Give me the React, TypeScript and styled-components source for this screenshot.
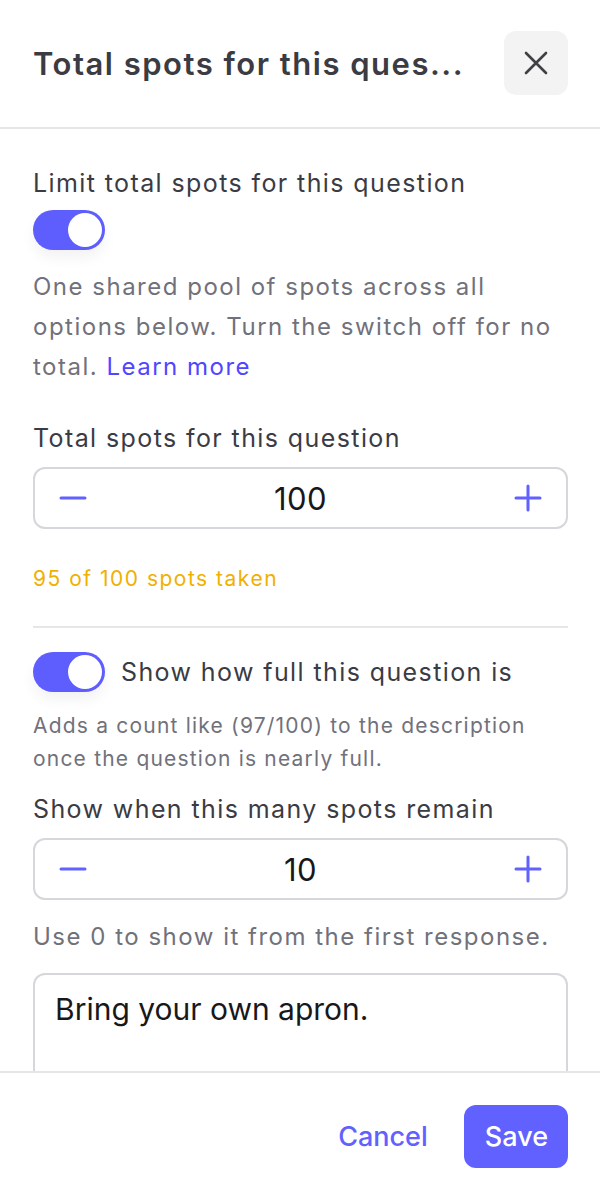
import React from "react";
import styled, { createGlobalStyle } from "styled-components";

const GlobalStyle = createGlobalStyle`
  * { box-sizing: border-box; }
  html, body { margin: 0; padding: 0; background: #ffffff; }
  body { font-family: Inter, "Noto Sans", "Liberation Sans", sans-serif; -webkit-font-smoothing: antialiased; }
`;

const PRIMARY = "#6161ff";

const Panel = styled.div`
  width: 600px;
  height: 1200px;
  display: flex;
  flex-direction: column;
  background: #fff;
  overflow: hidden;
`;

const Header = styled.header`
  height: 129px;
  flex: none;
  display: flex;
  align-items: center;
  justify-content: space-between;
  gap: 24px;
  padding: 0 32px 1px 33px;
  border-bottom: 2px solid #e6e6e9;
`;

const Title = styled.h2`
  margin: 0;
  font-size: 31px;
  font-weight: 600;
  color: #3b3b44;
  white-space: nowrap;
  overflow: hidden;
  text-overflow: ellipsis;
  letter-spacing: 1.5px;
`;

const CloseButton = styled.button`
  flex: none;
  width: 64px;
  height: 64px;
  border: none;
  border-radius: 12px;
  background: #f3f3f4;
  display: flex;
  align-items: center;
  justify-content: center;
  padding: 0;
  cursor: pointer;
`;

const Body = styled.div`
  flex: 1;
  min-height: 0;
  overflow: hidden;
  padding: 36px 32px 0 33px;
`;

const Label = styled.div<{ $mt?: number }>`
  font-size: 25px;
  line-height: 36px;
  letter-spacing: 1.4px;
  color: #3b3b44;
  font-weight: 400;
  margin-top: ${(p) => p.$mt ?? 0}px;
`;

const Help = styled.p<{ $mt?: number; $size?: "lg" | "sm" }>`
  margin: ${(p) => p.$mt ?? 0}px 0 0;
  font-size: ${(p) => (p.$size === "sm" ? "21px" : "24px")};
  line-height: ${(p) => (p.$size === "sm" ? "33px" : "40px")};
  letter-spacing: ${(p) => (p.$size === "sm" ? "1.2px" : "1.5px")};
  color: #71717b;
`;

const Link = styled.a`
  color: #5046ff;
  text-decoration: none;
`;

const SwitchTrack = styled.button<{ $on: boolean }>`
  flex: none;
  width: 72px;
  height: 40px;
  border-radius: 20px;
  border: none;
  padding: 3px;
  background: ${(p) => (p.$on ? "#5e5eff" : "#d4d4d8")};
  display: flex;
  justify-content: ${(p) => (p.$on ? "flex-end" : "flex-start")};
  align-items: center;
  box-shadow: 0 8px 14px rgba(0, 0, 0, 0.05);
  cursor: pointer;
`;

const SwitchKnob = styled.span`
  width: 34px;
  height: 34px;
  border-radius: 50%;
  background: #fff;
`;

const SwitchRow = styled.div<{ $mt?: number }>`
  display: flex;
  align-items: center;
  gap: 16px;
  margin-top: ${(p) => p.$mt ?? 0}px;
`;

const SwitchLabel = styled.span`
  font-size: 25px;
  line-height: 36px;
  letter-spacing: 1.4px;
  color: #3b3b44;
`;

const Stepper = styled.div<{ $mt?: number }>`
  margin-top: ${(p) => p.$mt ?? 0}px;
  height: 62px;
  border: 2px solid #d6d6db;
  border-radius: 12px;
  display: grid;
  grid-template-columns: 76px 1fr 76px;
  align-items: center;
`;

const StepButton = styled.button`
  height: 100%;
  border: none;
  background: transparent;
  display: flex;
  align-items: center;
  justify-content: center;
  padding: 0;
  cursor: pointer;
`;

const StepValue = styled.div`
  text-align: center;
  font-size: 31px;
  letter-spacing: 0.5px;
  color: #18181b;
`;

const Warning = styled.div<{ $mt?: number }>`
  margin-top: ${(p) => p.$mt ?? 0}px;
  font-size: 21px;
  line-height: 30px;
  letter-spacing: 1.5px;
  color: #f0b000;
`;

const Divider = styled.hr<{ $mt?: number }>`
  margin: ${(p) => p.$mt ?? 0}px 0 0;
  border: none;
  border-top: 2px solid #e6e6e9;
  width: 100%;
`;

const TextArea = styled.div<{ $mt?: number }>`
  margin-top: ${(p) => p.$mt ?? 0}px;
  border: 2px solid #d6d6db;
  border-bottom: none;
  border-radius: 12px 12px 0 0;
  padding: 16px 20px 60px;
  font-size: 30px;
  line-height: 36px;
  color: #18181b;
  min-height: 140px;
`;

const Footer = styled.footer`
  height: 129px;
  flex: none;
  border-top: 2px solid #e6e6e9;
  display: flex;
  align-items: center;
  justify-content: flex-end;
  gap: 16px;
  padding: 0 32px 1px;
`;

const FooterButton = styled.button<{ $primary?: boolean }>`
  height: 63px;
  border: none;
  border-radius: 12px;
  padding: 0 20px 0 21px;
  font-family: inherit;
  font-size: 27px;
  font-weight: 500;
  background: ${(p) => (p.$primary ? PRIMARY : "transparent")};
  color: ${(p) => (p.$primary ? "#ffffff" : PRIMARY)};
  cursor: pointer;
`;

const CloseIcon = () => (
  <svg width="26" height="26" viewBox="0 0 26 26" fill="none">
    <path d="M3 3L23 23M23 3L3 23" stroke="#3f3f46" strokeWidth="2.6" strokeLinecap="round" />
  </svg>
);

const MinusIcon = () => (
  <svg width="28" height="28" viewBox="0 0 28 28" fill="none">
    <path d="M2 14H26" stroke={PRIMARY} strokeWidth="3" strokeLinecap="round" />
  </svg>
);

const PlusIcon = () => (
  <svg width="28" height="28" viewBox="0 0 28 28" fill="none">
    <path d="M2 14H26M14 2V26" stroke={PRIMARY} strokeWidth="3" strokeLinecap="round" />
  </svg>
);

const Switch = ({ on }: { on: boolean }) => (
  <SwitchTrack $on={on} role="switch" aria-checked={on}>
    <SwitchKnob />
  </SwitchTrack>
);

const NumberStepper = ({ value, mt }: { value: number; mt: number }) => (
  <Stepper $mt={mt}>
    <StepButton aria-label="Decrease">
      <MinusIcon />
    </StepButton>
    <StepValue>{value}</StepValue>
    <StepButton aria-label="Increase">
      <PlusIcon />
    </StepButton>
  </Stepper>
);

export default function App() {
  return (
    <>
      <GlobalStyle />
      <Panel>
        <Header>
          <Title>Total spots for this ques...</Title>
          <CloseButton aria-label="Close">
            <CloseIcon />
          </CloseButton>
        </Header>
        <Body>
          <Label>Limit total spots for this question</Label>
          <SwitchRow $mt={9}>
            <Switch on />
          </SwitchRow>
          <Help $mt={17}>
            One shared pool of spots across all options below. Turn the switch off for no total.{" "}
            <Link href="#">Learn more</Link>
          </Help>
          <Label $mt={33}>Total spots for this question</Label>
          <NumberStepper value={100} mt={11} />
          <Warning $mt={35}>95 of 100 spots taken</Warning>
          <Divider $mt={32} />
          <SwitchRow $mt={24}>
            <Switch on />
            <SwitchLabel>Show how full this question is</SwitchLabel>
          </SwitchRow>
          <Help $mt={17} $size="sm">
            Adds a count like (97/100) to the description once the question is nearly full.
          </Help>
          <Label $mt={16}>Show when this many spots remain</Label>
          <NumberStepper value={10} mt={11} />
          <Help $mt={17}>Use 0 to show it from the first response.</Help>
          <TextArea $mt={16}>Bring your own apron.</TextArea>
        </Body>
        <Footer>
          <FooterButton>Cancel</FooterButton>
          <FooterButton $primary>Save</FooterButton>
        </Footer>
      </Panel>
    </>
  );
}
